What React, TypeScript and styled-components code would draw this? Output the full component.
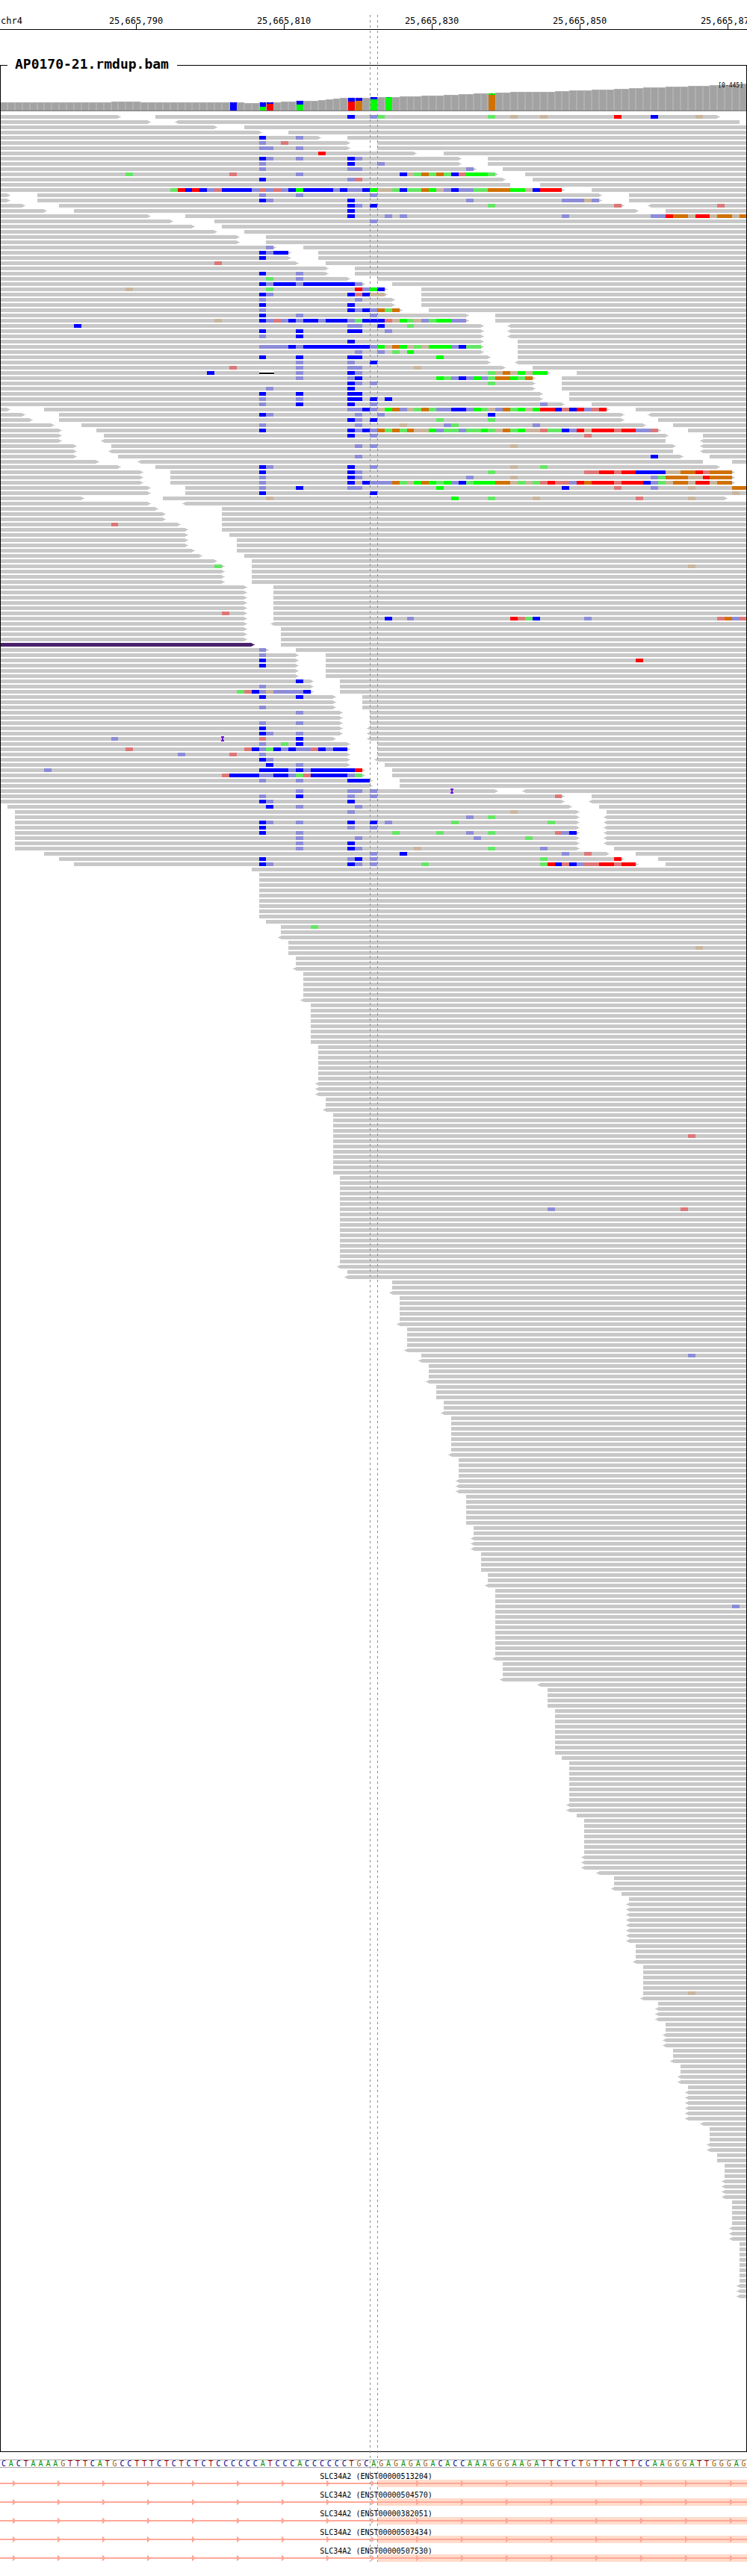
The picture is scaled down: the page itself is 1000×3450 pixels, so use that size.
import React from 'react';
import styled, { createGlobalStyle } from 'styled-components';

/* ---------- scale ---------- */

const BASES = 101;
const VIEW = 1000;
const ROW_PITCH = 7;
const READ_HEIGHT = 5;
const baseX = (index: number) => Math.round((index * VIEW) / BASES);

const READ_GRAY = '#c8c8c8';
const SPLIT_PURPLE = '#49216d';
const INSERTION = '#6f16dc';

/* Upper case: high base quality, lower case: low base quality. */
const BASE_FILL: Record<string, string> = {
  A: '#00ff00',
  C: '#0000ff',
  G: '#d17105',
  T: '#ff0000',
  a: '#64e664',
  c: '#8c8cd8',
  g: '#c9b59d',
  t: '#de7777',
};

/* ---------- data ---------- */

const TICKS = ['25,665,790', '25,665,810', '25,665,830', '25,665,850', '25,665,870'];

/* One string per packed row: "start-end" reads (< and > mark strand tips,
   * a chimeric read), "47Cc" mismatches, "ins30" and "del35-37". */
const PACKED_ROWS: string[] = `
0-16> 21-97> 47C 50ca 66a 69g 73g 83T 88C 94g
0-20> <24-100
0-29> 33-
0-35> 39-
0-43> 47- 35C 40c
0-47> 51- 35c 38t
0-47> 51- 35cc 40c
0-56> 60- 43T
0-62> 66- 35Cc 40c 47Cc
0-62> 66- 35c 47C 51c
0-64> 68- 35c 47cc 63c
0-67> 71- 17a 31t 40c 54CgaGaGaCtAAAa
0-68> 72- 35C 47ct
0-69 73-
0-76> 80- 23aTCTCctCCCCctctcCACCCCcCccCAggaCaaGAgcCccaaGGGAAgCTTT
0-1> 5-81> 85- 35c 40c 50c
0-1> 5-81> 85- 35Cc 47C 63c 76cccgc
0-3> 8-84> <88- 47Cc 50C 66a 83t 97t
0-6> 10-86> 90- 47C
0-20> 25- 47C 52c 54c 76c 88ccTGGgTTgGGgG
0-23> 29- 50c
0-26> 30-
0-29> 33-
0-32> 36-
0-32> 36-
0-37> 41- 36c
0-39> 43- 35CcCC
0-39> 43- 35C
0-40> 44- 29t
0-44> 48-
0-44> 48- 35C 40c
0-47> 51- 36a 40c
0-49> 53- 35CcCCCcCCCCCCCc
0-52> 57- 17g 36a 48TcAC
0-52> 57- 35Cc 47CtCgg
0-53> 57- 35c 48c
0-53> 57- 35C 47C
0-54> 58- 35c 47CcCcGaG
0-63> 67- 35C 40c 50c
0-63> 67- 29g 35CctcCcCCcCCCcaCCCtgAagcaAAcc
0-65> <69- 10C 47cc 51C 55a
0-65> <69- 35C 40C 47CC 52c
0-65> <69- 35c 40C
0-65> 70- 47C
0-65> 70- 35ccccCcCCCCCCCCCcAgGAgagAAAcCaa
0-65> 70- 48c 51c 53a 55A
0-66> 70- 35C 40C 47CC 59A
0-66> <70- 40c 47c 50C
0-68> 72- 31t 40c 47cc 56g
0-74> 78- 28C del35-37 40c 47Cc 66agGgAgAA
0-72> 76- 40c 47cC 59AacCcAcaGGAaG
0-72> 76- 47Cc 50c 66a
0-72> 76- 36c 47C
0-73> 77- 35C 40C 47CC
0-73> 77- 35c 40c 47CC 50C 52C
0-76> 80- 35c 40C 47C 50c 73c
0-1> 6-82> 86- 47ccCcgAGcgaGaccCCcAagcGaAgATTCtCTctT
0-3> 8-84> <88- 35Cc 48c 51c 66C
0-4> 8-84> 89- 47Cc 50C 59a 66a
0-7> 11-87> 91- 35c 48c 54g 60ca 72c
0-8> 13-89> 93- 35C 47CcCcGaGaGggAcaacaaAagGaAggtaaCcTgTTTtTTcct
0-8> 14-90> 95- 47C 50c 79t
0-8> <14-90 <95-
0-10> 15-91> <95- 48c 50c 69g
0-10> <15-91 <95-
0-10> 16-92> 96- 48c 88C
0-13> <19-95 99-
0-16> 21-97> 35Cc 47C 50c 69g 73a
0-19> 23-99> 35C 47Cc 66a 79ttTTtTTCCCCggGGTtGGG
0-19> 23-99> 35c 47Cc 63c 69g 88caGGGggTGGG
0-19> 23-99> 35c 47CgCcccGagAGAaAcCaAAAGGgagatTttcTGTTTtTTTCcagGGgTTgGG
0-20> 25- 35c 40C 47cc 59A 76C 83t 88c 93g 99GG
0-20> 25- 35C 50C 99g
0-11> 22-98> 36g 61A 66a 72g 86t 93g
0-20> <25-
0-21> 30-
0-22> 30-
0-22> 30-
0-24> 30- 15t
0-25> 30-
0-25> 31-
0-25> 32-
0-25> 32-
0-26> 32-
0-27> 33-
0-29> 34-
0-30> 34- 29a 93g
0-30> 34-
0-30> 34-
0-30> 34-
0-33> 37-
0-33> 37-
0-33> 37-
0-33> 37-
0-33> 37-
0-33> 37- 30t
0-33> 37- 52C 55c 69TtaC 79c 97tGct
0-33> <37-
0-33> 38-
0-33> 38-
0-33> 38-
*0-34> 38-
0-36> 40- 35c
0-40> 44- 35c
0-40> 44- 35C 86T
0-40> 44- 35C
0-40> 44-
0-40> 44-
0-42> 46- 40C
0-42> 46- 35c
0-42> 46- 32atCcgccccC
0-45> 49- 35C 40C
0-45> 49-
0-45> 49- 35c
0-46> 50- 40c
0-46> 50-
0-46> 50- 35c 40c
0-46> <50- 35C
0-46> <50- 35Cc 40c
0-45> <50- 15c ins30 35t 40C
0-47> 51- 35c 38a 40C
0-47> 51- 17t 33tCcaCcCcctCcCC
0-47> 51- 24c 31t 35c
0-47> <51- 35Cc
0-47> 52- 36C 40c
0-49> 53- 6c 35CCCCcCcCCCCCCT
0-49> 53- 30tCCCCccCCcatCCCCCca
0-50> 54- 35c 40c 47CCC
0-50> 54-
0-67> <71- 40c 47cc 50c ins61
0-76> 80- 35c 40C 47c 50c 75t
0-76> <80- 35Cc 47C
1-77> 81- 36C 40c 48c
2-78> 82- 47c 69g
2-78> <82- 63c 66a
2-78> <82- 35Cc 40c 47C 50C 52c 61a 74a
2-78> <82- 35C 47c 50c
2-78> <82- 35C 40c 53a 59a 63c 66a 75tcC
2-78> <82- 40c 48c 64c 71a
2-78> <82- 40c 47C
2-78> 83- 40c 47Cc 56g 66a 73c
6-82> 86- 50c 54C 76c 79t
8-84> 89- 35C 47cC 50c 73a 83T
10-86> 90- 35Cc 47Cc 50c 57a 73aTCtCcttTTtTT
`
  .trim()
  .split('\n');

/* The lower rows hold one read each: [first base, rows, rows with a strand tip]. */
const STAIRCASE: [number, number, number][] = [
  [34, 1, 0], [35, 9, 0], [36, 1, 0], [38, 3, 1], [39, 3, 0], [40, 3, 1],
  [41, 6, 1], [42, 8, 0], [43, 10, 3], [44, 3, 1], [45, 12, 0], [46, 18, 1],
  [47, 2, 1], [53, 3, 1], [54, 6, 1], [55, 5, 1], [57, 2, 1], [58, 4, 1],
  [59, 3, 0], [60, 3, 1], [61, 8, 1], [62, 7, 3], [63, 6, 0], [64, 5, 3],
  [65, 4, 0], [66, 3, 1], [67, 14, 1], [68, 4, 1], [73, 1, 1], [74, 4, 0],
  [75, 9, 0], [76, 1, 0], [77, 10, 2], [78, 1, 0], [79, 10, 3], [81, 1, 1],
  [83, 3, 1], [84, 1, 0], [85, 9, 8], [86, 4, 1], [87, 7, 1], [89, 4, 3],
  [90, 5, 3], [91, 3, 1], [92, 4, 2], [93, 7, 6], [95, 1, 1], [96, 5, 2],
  [97, 2, 0], [98, 7, 4], [99, 8, 3], [100, 11, 3],
];

const STAIRCASE_MISMATCHES: Record<number, string> = {
  155: '42a',
  159: '94g',
  195: '93t',
  209: '74c 92t',
  237: '93c',
  285: '99c',
  359: '93g',
};

const ROWS: string[] = [...PACKED_ROWS];
STAIRCASE.forEach(([start, count, tipped]) => {
  for (let i = 0; i < count; i += 1) {
    const tip = i >= count - tipped ? '<' : '';
    const extra = STAIRCASE_MISMATCHES[ROWS.length];
    ROWS.push(`${tip}${start}-${extra ? ` ${extra}` : ''}`);
  }
});

/* Coverage depth in pixels: [number of bases, height]. */
const DEPTH_RUNS: [number, number][] = [
  [15, 11], [4, 12], [14, 11], [2, 10], [3, 11], [2, 12], [3, 13], [1, 14],
  [1, 15], [1, 16], [4, 17], [4, 18], [3, 19], [3, 20], [2, 21], [2, 22],
  [3, 23], [2, 24], [6, 25], [2, 26], [3, 27], [3, 28], [2, 29], [2, 30],
  [3, 31], [3, 32], [3, 33], [3, 34], [1, 35], [1, 36],
];
const DEPTHS = DEPTH_RUNS.flatMap(([count, height]) => Array<number>(count).fill(height));

/* Allele stacks, listed from the bottom up: [base letter, height]. */
interface Allele {
  stack: [string, number][];
  dot?: string;
}
const ALLELES: Record<number, Allele> = {
  31: { stack: [['C', 11]], dot: '#ff4000' },
  35: { stack: [['A', 5], ['C', 6]], dot: '#ff4000' },
  36: { stack: [['T', 9], ['C', 2]], dot: '#d17105' },
  40: { stack: [['A', 8], ['C', 5]] },
  47: { stack: [['T', 12], ['C', 5]] },
  48: { stack: [['G', 13], ['C', 4]], dot: '#ff0000' },
  50: { stack: [['A', 15], ['C', 3]] },
  52: { stack: [['A', 18]], dot: '#0000ff' },
  66: { stack: [['G', 21], ['A', 2]], dot: '#0000ff' },
};

const REFERENCE =
  'CACTAAAAGTTTCATGCCTTTCTCTCTCTCCCCCCATCCCACCCCCCTGC' +
  'AGAGAGAGACACCAAAGGGAAGATTCTCTGTTTCTTCCAAGGGATTGGGAG';

const TRANSCRIPTS = [
  'ENST00000513204',
  'ENST00000504570',
  'ENST00000382051',
  'ENST00000503434',
  'ENST00000507530',
];

/* ---------- styles ---------- */

const GlobalStyle = createGlobalStyle`
  body {
    margin: 0;
    background: #fff;
    color: #000;
    font-family: "DejaVu Sans Mono", "Liberation Mono", monospace;
  }
`;

const Viewer = styled.main`
  position: relative;
  overflow: hidden;
`;

const Ruler = styled.header`
  display: flex;
  padding-top: 21px;
  overflow: hidden;
  border-bottom: 1px solid #000;
  font-size: 12px;
  line-height: 14px;
`;

const Chromosome = styled.span`
  flex: 0 0 8.3%;
  box-sizing: border-box;
  padding-left: 1px;
  white-space: nowrap;
`;

const Tick = styled.span`
  flex: 0 0 19.8%;
  text-align: center;

  &::after {
    content: '';
    display: block;
    width: 1px;
    height: 7px;
    margin: -3px 0 0 50%;
    background: #000;
  }
`;

const Panel = styled.fieldset`
  min-width: 0;
  margin: 35px 0 0;
  padding: 0 0 205px;
  border: 1px solid #000;
`;

const PanelTitle = styled.legend`
  margin-left: 9px;
  padding: 0 11px 4px 10px;
  font-size: 18px;
  font-weight: bold;
  line-height: 21px;
`;

const CoverageTrack = styled.div`
  position: relative;
`;

const DepthRange = styled.span`
  position: absolute;
  top: 10px;
  right: 4px;
  font-size: 8px;
  line-height: 9px;
`;

const Drawing = styled.svg`
  display: block;
  width: 100%;
  shape-rendering: crispEdges;
`;

const Sequence = styled.div`
  display: flex;
  margin-top: 10px;
  border: solid #a9a9a9;
  border-width: 1px 0;
  font-size: 10px;
  line-height: 9px;
`;

const LETTER_COLOR: Record<string, string> = {
  A: '#009000',
  C: '#000090',
  G: '#a06000',
  T: '#a00000',
};

const Letter = styled.span<{ $base: string }>`
  flex: 1 1 0;
  min-width: 0;
  text-align: center;
  color: ${({ $base }) => LETTER_COLOR[$base]};
`;

const Genes = styled.section`
  display: grid;
  gap: 6px;
  padding: 7px 0 20px;
`;

const GeneLabel = styled.div`
  padding-left: 7px;
  font-size: 10px;
  line-height: 9px;
  text-align: center;
  white-space: nowrap;
`;

const CenterGuide = styled.div<{ $base: number }>`
  position: absolute;
  top: 20px;
  bottom: 20px;
  left: calc(100% * ${({ $base }) => $base} / ${BASES});
  width: 1px;
  background: repeating-linear-gradient(#8c8c8c 0 3px, transparent 3px 7px);
  pointer-events: none;
`;

/* ---------- tracks ---------- */

const COVERAGE_HEIGHT = 49;

function Coverage() {
  const floor = COVERAGE_HEIGHT - 1;
  return (
    <CoverageTrack>
      <Drawing
        height={COVERAGE_HEIGHT}
        viewBox={`1 0 ${VIEW - 2} ${COVERAGE_HEIGHT}`}
        preserveAspectRatio="none"
      >
        {DEPTHS.map((depth, i) => {
          const x = baseX(i);
          const width = baseX(i + 1) - x;
          const allele = ALLELES[i];
          let top = floor;
          return (
            <g key={i}>
              <rect x={x} y={floor - depth} width={width} height={depth} fill="#b0b0b0" />
              {!allele && (
                <rect x={x + 1} y={floor - depth + 1} width={width - 2} height={depth - 1} fill="#a2a2a2" />
              )}
              {allele?.stack.map(([letter, height]) => {
                top -= height;
                return (
                  <rect key={letter} x={x + 1} y={top} width={width - 1} height={height} fill={BASE_FILL[letter]} />
                );
              })}
              {allele?.dot && <rect x={x + 5} y={top} width={1} height={1} fill={allele.dot} />}
            </g>
          );
        })}
        <rect x={0} y={floor} width={VIEW} height={1} fill="#777777" />
      </Drawing>
      <DepthRange>[0-445]</DepthRange>
    </CoverageTrack>
  );
}

function Read({ token, y }: { token: string; y: number }) {
  const match = /^(\*?)(<?)(\d+)-(\d*)(>?)$/.exec(token);
  if (!match) return null;
  const x = baseX(Number(match[3]));
  const end = baseX(match[4] ? Number(match[4]) : BASES);
  const fill = match[1] ? SPLIT_PURPLE : READ_GRAY;
  return (
    <g fill={fill}>
      <rect x={x} y={y} width={end - x} height={READ_HEIGHT} />
      {match[2] && <path d={`M${x} ${y + 1}h-2v1h-2v1h2v1h2z`} />}
      {match[5] && <path d={`M${end} ${y + 1}h2v1h2v1h-2v1h-2z`} />}
    </g>
  );
}

function Feature({ token, y }: { token: string; y: number }) {
  if (token.startsWith('ins')) {
    const x = baseX(Number(token.slice(3))) + 1;
    return <path d={`M${x - 2} ${y - 1}h4v2h-1v3h1v2h-4v-2h1v-3h-1z`} fill={INSERTION} />;
  }
  if (token.startsWith('del')) {
    const [from, to] = token.slice(3).split('-').map(Number);
    const x = baseX(from);
    const width = baseX(to) - x + 1;
    return (
      <>
        <rect x={x} y={y} width={width} height={READ_HEIGHT} fill="#fff" />
        <rect x={x} y={y + 2} width={width} height={2} fill="#000" />
      </>
    );
  }
  const match = /^(\d+)([A-Za-z]+)$/.exec(token);
  if (!match) return null;
  const first = Number(match[1]);
  return (
    <>
      {match[2].split('').map((letter, i) => {
        const x = baseX(first + i);
        return (
          <rect
            key={i}
            x={x}
            y={y}
            width={baseX(first + i + 1) - x}
            height={READ_HEIGHT}
            fill={BASE_FILL[letter]}
          />
        );
      })}
    </>
  );
}

function Alignments() {
  const height = ROWS.length * ROW_PITCH + 3;
  return (
    <Drawing height={height} viewBox={`1 0 ${VIEW - 2} ${height}`} preserveAspectRatio="none">
      {ROWS.map((row, index) => {
        const y = 5 + index * ROW_PITCH;
        const tokens = row.split(' ');
        return (
          <g key={index}>
            {tokens.map((token) => (
              <Read key={token} token={token} y={y} />
            ))}
            {tokens.map((token) => (
              <Feature key={token} token={token} y={y} />
            ))}
          </g>
        );
      })}
    </Drawing>
  );
}

function Gene({ transcript }: { transcript: string }) {
  return (
    <div>
      <GeneLabel>SLC34A2 ({transcript})</GeneLabel>
      <Drawing height={10} viewBox={`0 0 ${VIEW} 10`} preserveAspectRatio="none">
        <rect x={baseX(51)} y={0} width={VIEW - baseX(51)} height={10} fill="#ffdbcb" />
        <rect x={0} y={4} width={VIEW} height={2} fill="#ffa898" />
        {Array.from({ length: 17 }, (_, i) => (
          <path key={i} d={`M${17 + i * 60} 1h1v1h1v1h1v4h-1v1h-1v1h-1z`} fill="#ffa898" />
        ))}
      </Drawing>
    </div>
  );
}

export default function App() {
  return (
    <>
      <GlobalStyle />
      <Viewer>
        <Ruler>
          <Chromosome>chr4</Chromosome>
          {TICKS.map((tick) => (
            <Tick key={tick}>{tick}</Tick>
          ))}
        </Ruler>
        <Panel>
          <PanelTitle>AP0170-21.rmdup.bam</PanelTitle>
          <Coverage />
          <Alignments />
        </Panel>
        <Sequence>
          {REFERENCE.split('').map((base, i) => (
            <Letter key={i} $base={base}>
              {base}
            </Letter>
          ))}
        </Sequence>
        <Genes>
          {TRANSCRIPTS.map((transcript) => (
            <Gene key={transcript} transcript={transcript} />
          ))}
        </Genes>
        <CenterGuide $base={50} />
        <CenterGuide $base={51} />
      </Viewer>
    </>
  );
}
